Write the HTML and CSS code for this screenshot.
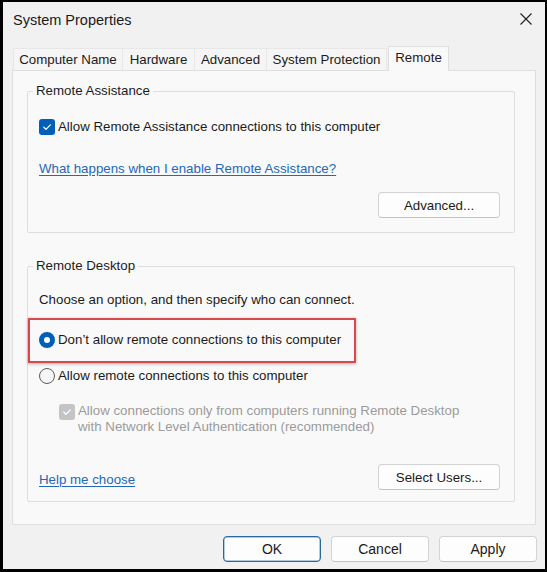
FILE: index.html
```html
<!DOCTYPE html>
<html>
<head>
<meta charset="utf-8">
<link rel="stylesheet" href="styles.css">
</head>
<body>
<div class="window">
  <div class="titlebar">
    <span class="title">System Properties</span>
    <svg class="close" width="12" height="12" viewBox="0 0 12 12"><path d="M0.5 0.5 L11.5 11.5 M11.5 0.5 L0.5 11.5" stroke="#1f1f1f" stroke-width="1.1" fill="none"/></svg>
  </div>
  <div class="tabs">
    <div class="tab t-cn">Computer Name</div>
    <div class="tab t-hw">Hardware</div>
    <div class="tab t-adv">Advanced</div>
    <div class="tab t-sp">System Protection</div>
    <div class="tab active">Remote</div>
  </div>
  <div class="panel">
    <fieldset class="group g1">
      <legend>Remote Assistance</legend>
      <div class="row">
        <span class="cb checked"><svg width="10" height="10" viewBox="0 0 10 10"><path d="M1.8 5.2 L4 7.3 L8.3 2.8" stroke="#fff" stroke-width="1.2" fill="none" stroke-linecap="round" stroke-linejoin="round"/></svg></span>
        <span>Allow Remote Assistance connections to this computer</span>
      </div>
      <div class="row link-row"><span class="link">What happens when I enable Remote Assistance?</span></div>
      <div class="btn-row g1-btns"><button class="btn wide">Advanced...</button></div>
    </fieldset>
    <fieldset class="group g2">
      <legend>Remote Desktop</legend>
      <div class="row">Choose an option, and then specify who can connect.</div>
      <div class="row radio-row first">
        <span class="highlight">
          <span class="radio on"></span>
          <span>Don’t allow remote connections to this computer</span>
        </span>
      </div>
      <div class="row radio-row second">
        <span class="radio"></span>
        <span>Allow remote connections to this computer</span>
      </div>
      <div class="nla">
        <span class="cb disabled"><svg width="10" height="10" viewBox="0 0 10 10"><path d="M1.8 5.2 L4 7.3 L8.3 2.8" stroke="#fff" stroke-width="1.2" fill="none" stroke-linecap="round" stroke-linejoin="round"/></svg></span>
        <span class="nla-text">Allow connections only from computers running Remote Desktop<br>with Network Level Authentication (recommended)</span>
      </div>
      <div class="bottom-row">
        <span class="link help">Help me choose</span>
        <button class="btn wide">Select Users...</button>
      </div>
    </fieldset>
  </div>
  <div class="footer">
    <button class="btn std default">OK</button>
    <button class="btn std">Cancel</button>
    <button class="btn std">Apply</button>
  </div>
</div>
</body>
</html>
```
FILE: styles.css
```css
html, body {
  margin: 0;
  padding: 0;
  background: #000;
}
body {
  width: 547px;
  height: 572px;
  overflow: hidden;
  font-family: "Liberation Sans", Arial, sans-serif;
  font-size: 13.3px;
  color: #1b1b1b;
}
.window {
  margin: 2px 2px 3px 3px;
  width: 542px;
  height: 567px;
  background: #f1f1f1;
  display: flex;
  flex-direction: column;
  box-sizing: border-box;
}
.titlebar {
  height: 44px;
  display: flex;
  justify-content: space-between;
  align-items: flex-start;
  padding: 0 13px 0 10px;
  flex: none;
}
.title {
  font-size: 14.5px;
  line-height: 20px;
  padding-top: 8px;
  color: #1a1a1a;
}
.close {
  margin-top: 11px;
}
.tabs {
  display: flex;
  align-items: flex-end;
  height: 25px;
  margin: 0 0 -1px 10px;
  flex: none;
}
.tab {
  height: 22px;
  line-height: 21px;
  margin-bottom: 1px;
  box-sizing: border-box;
  text-align: center;
  background: #f5f5f5;
  border: 1px solid #e7e7e7;
  border-bottom: none;
  margin-right: -1px;
  color: #1b1b1b;
  white-space: nowrap;
}
.t-cn { width: 110px; }
.t-hw { width: 73px; }
.t-adv { width: 73px; }
.t-sp { width: 121px; }
.tab.active {
  position: relative;
  z-index: 1;
  height: 25px;
  line-height: 21px;
  margin-bottom: 0;
  margin-left: 2px;
  width: 61px;
  background: #f9f9f9;
  border-color: #dedede;
}
.panel {
  height: 455px;
  margin: 0 9px;
  box-sizing: border-box;
  background: #f9f9f9;
  border: 1px solid #dedede;
  padding: 11px 20px 0 14px;
  flex: none;
}
.group {
  margin: 0;
  border: 1px solid #dedede;
  border-radius: 2px;
  padding: 0 14px 0 11px;
  min-width: 0;
}
.group legend {
  font-size: 13.3px;
  line-height: 18px;
  padding: 0 3px;
  margin-left: -6px;
  color: #1b1b1b;
}
.row {
  height: 20px;
  line-height: 20px;
  display: flex;
  align-items: center;
  white-space: nowrap;
}
.g1 {
  padding-top: 17px;
  padding-bottom: 14px;
}
.g1 .link-row {
  margin-top: 22px;
}
.g1-btns {
  margin-top: 13px;
}
.btn-row {
  display: flex;
  justify-content: flex-end;
}
.g2 {
  margin-top: 24px;
  padding-top: 15px;
  padding-bottom: 11px;
}
.radio-row.first { margin-top: 20px; }
.radio-row.second { margin-top: 16px; }
.cb {
  width: 16px;
  height: 16px;
  box-sizing: border-box;
  border-radius: 3px;
  display: inline-flex;
  align-items: center;
  justify-content: center;
  margin-right: 3px;
  flex: none;
}
.cb.checked {
  background: #005fb8;
}
.cb.disabled {
  background: #c4c4c4;
}
.radio {
  width: 16px;
  height: 16px;
  box-sizing: border-box;
  border-radius: 50%;
  border: 1px solid #5c5c5c;
  background: #f6f6f6;
  margin-right: 3px;
  flex: none;
}
.radio.on {
  border: 5px solid #005fb8;
  background: #fff;
}
.highlight {
  position: relative;
  display: flex;
  align-items: center;
}
.highlight::after {
  content: "";
  position: absolute;
  left: -11px;
  top: -12px;
  width: 328px;
  height: 45px;
  box-sizing: border-box;
  border: 2px solid #d9484b;
  box-shadow: 0 1px 3px rgba(0, 0, 0, 0.3);
}
.nla {
  display: flex;
  align-items: flex-start;
  margin-top: 17px;
  padding-left: 20px;
}
.nla .cb {
  margin-top: 1px;
}
.nla-text {
  color: #9b9b9b;
  line-height: 16px;
}
.bottom-row {
  margin-top: 29px;
  display: flex;
  justify-content: space-between;
  align-items: center;
}
.link {
  color: #2468b9;
  text-decoration: underline;
  text-underline-offset: 2px;
}
.help {
  padding-top: 4px;
}
.btn {
  font-family: "Liberation Sans", Arial, sans-serif;
  font-size: 13.3px;
  color: #1b1b1b;
  height: 26px;
  box-sizing: border-box;
  background: #fdfdfd;
  border: 1px solid #d3d3d3;
  border-bottom-color: #c2c2c2;
  border-radius: 4px;
  padding: 0;
}
.btn.wide {
  width: 122px;
}
.footer {
  display: flex;
  justify-content: flex-end;
  gap: 10px;
  margin-top: 11px;
  padding-right: 8px;
  flex: none;
}
.btn.std {
  width: 98px;
  font-size: 14px;
}
.btn.default {
  border: 1px solid #2a679f;
  box-shadow: inset 0 0 0 0.5px #6d98c0;
}
```
